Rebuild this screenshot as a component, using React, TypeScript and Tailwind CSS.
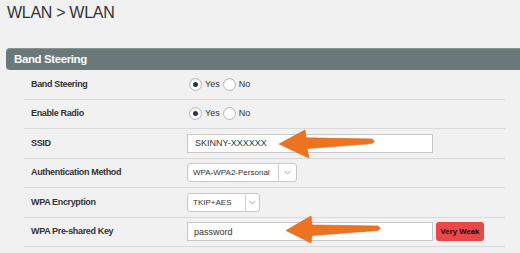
import React from 'react';

const font = "font-['Liberation_Sans',Arial,Helvetica,sans-serif]";

function Radio({ checked }: { checked?: boolean }) {
  return (
    <span className="w-[13px] h-[13px] rounded-full border border-[#b8b8b8] bg-white shadow-[inset_0_1px_1px_rgba(0,0,0,0.08)] flex items-center justify-center">
      {checked && <span className="w-[5px] h-[5px] rounded-full bg-[#2a3350]" />}
    </span>
  );
}

function YesNo() {
  return (
    <div className="ml-[2px] flex items-center gap-[3px] text-[9px] text-[#333]">
      <Radio checked />
      <span>Yes</span>
      <Radio />
      <span>No</span>
    </div>
  );
}

function Select({ value, width, arrow }: { value: string; width: string; arrow: string }) {
  return (
    <div className={`${width} h-[19px] flex bg-white border border-[#c9c9c9] rounded-[3px] text-[8px] text-[#333]`}>
      <span className="flex-1 pl-[5px] leading-[17px] whitespace-nowrap">{value}</span>
      <span className={`${arrow} border-l border-[#d0d0d0] flex items-center justify-center`}>
        <svg width="7" height="5" viewBox="0 0 7 5">
          <polyline points="0.5,0.8 3.5,4 6.5,0.8" fill="none" stroke="#a0a0a0" strokeWidth="0.9" />
        </svg>
      </span>
    </div>
  );
}

function Row({ label, children }: { label: string; children: React.ReactNode }) {
  return (
    <div className="h-[29.5px] flex items-center border-b border-[#d9d9d9]">
      <div className="w-[163px] pl-[7px] text-[9px] font-bold tracking-[-0.35px] text-[#333]">{label}</div>
      {children}
    </div>
  );
}

export default function App() {
  return (
    <div className={`relative w-[520px] h-[253px] overflow-hidden bg-[#f1f1f1] ${font}`}>
      <h1 className="pl-[7px] pt-[4px] text-[16px] leading-[18px] tracking-[-0.3px] text-[#333]">
        WLAN &gt; WLAN
      </h1>

      <div className="mt-[26px] ml-[6px] h-[22px] bg-[#697878] border-t border-[#86938f] rounded-l-[4px] pl-[8px] text-white font-bold text-[11.5px] leading-[21px] tracking-[-0.4px]">
        Band Steering
      </div>

      <div className="ml-[24px] w-[481px]">
        <Row label="Band Steering">
          <YesNo />
        </Row>
        <Row label="Enable Radio">
          <YesNo />
        </Row>
        <Row label="SSID">
          <input
            readOnly
            value="SKINNY-XXXXXX"
            className="w-[246px] h-[19px] bg-white border border-[#c9c9c9] pl-[7px] text-[9px] text-[#333] outline-none"
          />
        </Row>
        <Row label="Authentication Method">
          <Select value="WPA-WPA2-Personal" width="w-[110px]" arrow="w-[18px]" />
        </Row>
        <Row label="WPA Encryption">
          <Select value="TKIP+AES" width="w-[73px]" arrow="w-[14px]" />
        </Row>
        <Row label="WPA Pre-shared Key">
          <div className="flex items-center gap-[3px]">
            <input
              readOnly
              value="password"
              className="w-[246px] h-[19px] bg-white border border-[#c9c9c9] pl-[6px] text-[9px] text-[#333] outline-none"
            />
            <span className="w-[48px] h-[19px] rounded-[3px] bg-[#e84848] text-[#2a0505] font-bold text-[7.8px] leading-[19px] text-center">
              Very Weak
            </span>
          </div>
        </Row>
      </div>

      {/* annotation arrows drawn over the form */}
      <svg className="absolute inset-0 pointer-events-none" width="520" height="253" viewBox="0 0 520 253">
        <polygon
          points="279,144 305,130 306,137.8 372,139 374.5,141.2 372,143.6 307,148.6 309,158"
          fill="#ee7320"
          stroke="#d8620e"
          strokeWidth="0.6"
          strokeLinejoin="round"
        />
        <polygon
          points="286,230.5 311,216 312,225 378,226 380.5,228.2 378,230.4 312,235.6 311,243"
          fill="#ee7320"
          stroke="#d8620e"
          strokeWidth="0.6"
          strokeLinejoin="round"
        />
      </svg>
    </div>
  );
}
